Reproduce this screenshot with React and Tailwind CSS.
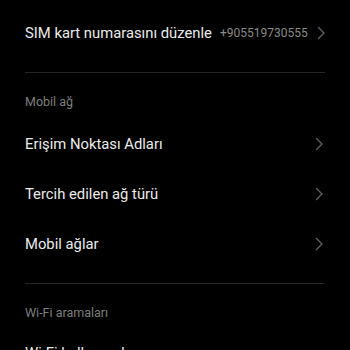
import React from 'react';

const Chevron = () => (
  <svg width="9" height="14" viewBox="0 0 9 14" fill="none" className="shrink-0">
    <path d="M1.5 1.5 L7 7 L1.5 12.5" stroke="#5f5f5f" strokeWidth="1.4" strokeLinecap="round" strokeLinejoin="round" />
  </svg>
);

const Row = ({ title, value, noArrow }) => (
  <div className="flex items-center h-[50px] pl-[25px] pr-[26px]">
    <span className="flex-1 text-[14.8px] text-[#ebebeb] whitespace-nowrap">{title}</span>
    {value && <span className="text-[12px] text-[#8a8a8a] ml-[8px] mr-[9px]">{value}</span>}
    {!noArrow && <Chevron />}
  </div>
);

const Header = ({ children }) => (
  <div className="h-[30px] flex items-center px-[25px] text-[12.5px] text-[#7d7d7d]">{children}</div>
);

const Divider = () => <div className="mx-[25px] h-px bg-[#252525]" />;

export default function App() {
  return (
    <div className="w-[350px] h-[350px] overflow-hidden bg-black font-['Roboto',sans-serif]">
      <div className="pt-[8px]">
        <Row title="SIM kart numarasını düzenle" value="+905519730555" />
        <div className="h-[14px]" />
        <Divider />
        <div className="h-[14px]" />
        <Header>Mobil ağ</Header>
        <div className="h-[2px]" />
        <Row title="Erişim Noktası Adları" />
        <Row title="Tercih edilen ağ türü" />
        <Row title="Mobil ağlar" />
        <div className="h-[14px]" />
        <Divider />
        <div className="h-[14px]" />
        <Header>Wi-Fi aramaları</Header>
        <Row title="Wi-Fi kullanarak arama yapın" noArrow />
      </div>
    </div>
  );
}
